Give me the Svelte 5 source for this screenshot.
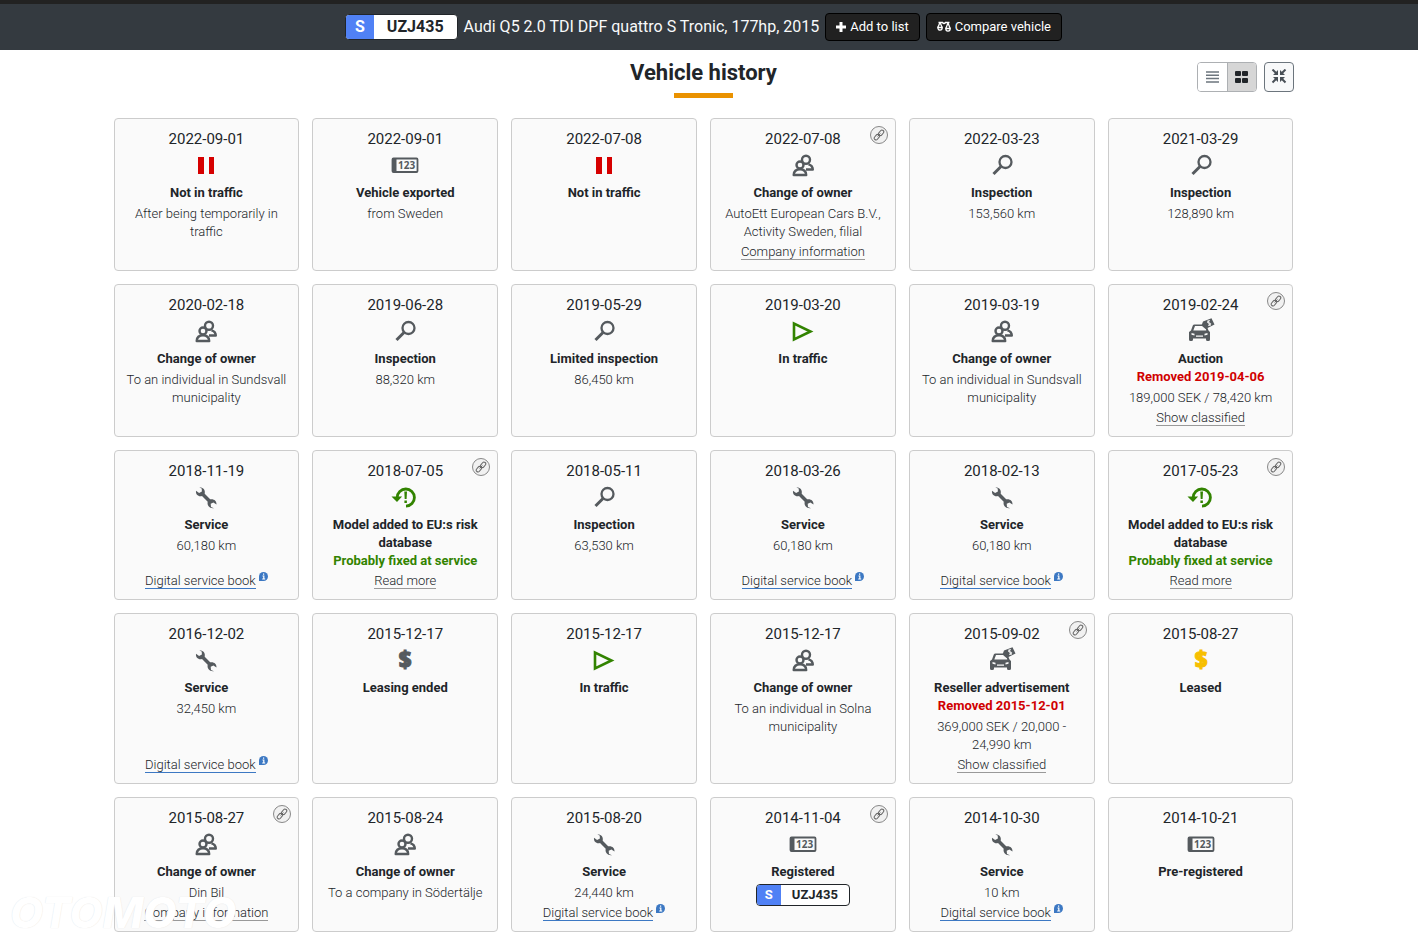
<script lang="ts">
  type IconName = 'pause' | 'plate' | 'owner' | 'search' | 'play' | 'auction' | 'wrench' | 'risk' | 'dollar' | 'leased';

  interface HistoryEvent {
    date: string;
    icon: IconName;
    title: string;
    status?: string;
    tone?: 'red' | 'green';
    text?: string;
    link?: string;
    book?: boolean;    // digital service book link with info badge
    shared?: boolean;  // chain button in the corner
    plate?: boolean;
  }

  const regNo = 'UZJ435';

  const events: HistoryEvent[] = [
    { date: '2022-09-01', icon: 'pause', title: 'Not in traffic', text: 'After being temporarily in traffic' },
    { date: '2022-09-01', icon: 'plate', title: 'Vehicle exported', text: 'from Sweden' },
    { date: '2022-07-08', icon: 'pause', title: 'Not in traffic' },
    { date: '2022-07-08', icon: 'owner', title: 'Change of owner', text: 'AutoEtt European Cars B.V., Activity Sweden, filial', link: 'Company information', shared: true },
    { date: '2022-03-23', icon: 'search', title: 'Inspection', text: '153,560 km' },
    { date: '2021-03-29', icon: 'search', title: 'Inspection', text: '128,890 km' },

    { date: '2020-02-18', icon: 'owner', title: 'Change of owner', text: 'To an individual in Sundsvall municipality' },
    { date: '2019-06-28', icon: 'search', title: 'Inspection', text: '88,320 km' },
    { date: '2019-05-29', icon: 'search', title: 'Limited inspection', text: '86,450 km' },
    { date: '2019-03-20', icon: 'play', title: 'In traffic' },
    { date: '2019-03-19', icon: 'owner', title: 'Change of owner', text: 'To an individual in Sundsvall municipality' },
    { date: '2019-02-24', icon: 'auction', title: 'Auction', status: 'Removed 2019-04-06', tone: 'red', text: '189,000 SEK / 78,420 km', link: 'Show classified', shared: true },

    { date: '2018-11-19', icon: 'wrench', title: 'Service', text: '60,180 km', book: true },
    { date: '2018-07-05', icon: 'risk', title: 'Model added to EU:s risk database', status: 'Probably fixed at service', tone: 'green', link: 'Read more', shared: true },
    { date: '2018-05-11', icon: 'search', title: 'Inspection', text: '63,530 km' },
    { date: '2018-03-26', icon: 'wrench', title: 'Service', text: '60,180 km', book: true },
    { date: '2018-02-13', icon: 'wrench', title: 'Service', text: '60,180 km', book: true },
    { date: '2017-05-23', icon: 'risk', title: 'Model added to EU:s risk database', status: 'Probably fixed at service', tone: 'green', link: 'Read more', shared: true },

    { date: '2016-12-02', icon: 'wrench', title: 'Service', text: '32,450 km', book: true },
    { date: '2015-12-17', icon: 'dollar', title: 'Leasing ended' },
    { date: '2015-12-17', icon: 'play', title: 'In traffic' },
    { date: '2015-12-17', icon: 'owner', title: 'Change of owner', text: 'To an individual in Solna municipality' },
    { date: '2015-09-02', icon: 'auction', title: 'Reseller advertisement', status: 'Removed 2015-12-01', tone: 'red', text: '369,000 SEK / 20,000 - 24,990 km', link: 'Show classified', shared: true },
    { date: '2015-08-27', icon: 'leased', title: 'Leased' },

    { date: '2015-08-27', icon: 'owner', title: 'Change of owner', text: 'Din Bil', link: 'Company information', shared: true },
    { date: '2015-08-24', icon: 'owner', title: 'Change of owner', text: 'To a company in Södertälje' },
    { date: '2015-08-20', icon: 'wrench', title: 'Service', text: '24,440 km', book: true },
    { date: '2014-11-04', icon: 'plate', title: 'Registered', plate: true, shared: true },
    { date: '2014-10-30', icon: 'wrench', title: 'Service', text: '10 km', book: true },
    { date: '2014-10-21', icon: 'plate', title: 'Pre-registered' },
  ];

  let view = $state<'list' | 'grid'>('grid');
</script>

{#snippet plate(small: boolean)}
  <span class="plate" class:plate-small={small}>
    <span class="plate-country">S</span>
    <span class="plate-number">{regNo}</span>
  </span>
{/snippet}

{#snippet icon(name: IconName)}
  <svg class="icon icon-{name}" width="28" height="28" viewBox="0 0 28 28" aria-hidden="true">
    {#if name === 'pause'}
      <path fill="currentColor" d="M6 6h6v17H6zM17 6h5v17h-5z" />
    {:else if name === 'plate'}
      <rect x="1.500" y="7.500" width="25" height="13.500" rx="1" fill="none" stroke="currentColor" stroke-width="1.800" />
      <path fill="currentColor" d="M1 7h4.500v14H1z" />
      <text x="15.700" y="18" text-anchor="middle" font-family="Open Sans" font-size="10" font-weight="700" fill="currentColor">123</text>
    {:else if name === 'owner'}
      <g fill="none" stroke="currentColor" stroke-width="2.400" stroke-linejoin="round">
        <circle cx="17" cy="8.800" r="4" />
        <path d="M19.500 13.300c2.800.8 4.300 2.400 4.300 5.200H17" />
        <circle cx="11" cy="14" r="3.500" fill="#fafafa" />
        <path d="M4.700 24c.2-3.500 2.300-5.700 6.300-5.700s6 2.200 6.200 5.700z" fill="#fafafa" />
      </g>
    {:else if name === 'search'}
      <circle cx="17.500" cy="11" r="6" fill="none" stroke="currentColor" stroke-width="2.300" />
      <path d="m13 15.500-7.500 7.500" stroke="currentColor" stroke-width="3" />
    {:else if name === 'play'}
      <path d="M5 6.500v16l16.500-8z" fill="none" stroke="currentColor" stroke-width="2.600" />
    {:else if name === 'auction'}
      <path fill="currentColor" fill-rule="evenodd" d="M2 15l2-1.500 1.800-5Q6.200 7.500 7.500 7.500h8l.5 1.500H8L6.300 13.500h13L18.500 11h2l1 2.500L23 15v7.500q0 1.500-1.500 1.500h-1Q19 24 19 22.500v-1H6v1Q6 24 4.500 24h-1Q2 24 2 22.500zM4.500 16v1.800l3 .7v-1.700zM20.500 16v1.800l-3 .7v-1.700zM9 18.500v1.300h7v-1.300z" />
      <path fill="currentColor" d="M14.500 8.500 16 4.500l8.500-3.300 3 6.300-9 4.500z" />
      <path d="M23 3.800c-1.500-.4-3 .7-2.400 1.800.5 1 2.600-.2 3.100 1 .4 1-1.400 2.200-2.700 1.500M20.900 3.500l2.400 5.500" fill="none" stroke="#fafafa" stroke-width="1" />
    {:else if name === 'wrench'}
      <path fill="currentColor" d="M7.300 4.500C11.500 4.300 13.500 7 12.700 10.700l5.500 5.600c3.700-.7 6.600 1.600 6.300 5.200l-3.100-2-2.700 1.200.3 3.200 3 1.300c-4.300.6-7.200-2.500-6.300-6.400L10 13.100c-3.700.9-6.500-1.600-6-5.300l3.100 2.200 2.800-1.400-.2-3z" />
    {:else if name === 'risk'}
      <path d="M6.200 14.500a8.600 8.600 0 1 1 8.800 8.700" fill="none" stroke="currentColor" stroke-width="2.800" />
      <path fill="currentColor" d="M.5 13.500h10.600L6 19zM13.300 8.500h2.700l-.4 7.500h-1.900zM13.400 17.500h2.500V20h-2.500z" />
    {:else}
      <text x="14" y="22" text-anchor="middle" font-family="Open Sans" font-size="22" font-weight="800" stroke="currentColor" stroke-width="1" fill="currentColor">$</text>
    {/if}
  </svg>
{/snippet}

<div class="page">
  <header class="topbar">
    {@render plate(false)}
    <span class="vehicle">Audi Q5 2.0 TDI DPF quattro S Tronic, 177hp, 2015</span>
    <button type="button" class="dark-btn">
      <svg width="10" height="10" viewBox="0 0 10 10" aria-hidden="true"><path d="M5 0v10M0 5h10" stroke="currentColor" stroke-width="3" /></svg>
      Add to list
    </button>
    <button type="button" class="dark-btn">
      <svg width="14" height="12" viewBox="0 0 14 12" fill="none" stroke="currentColor" stroke-width="1.300" aria-hidden="true">
        <path d="M1.500 1.500h4q1.500 2 3 0h4M3 1.500.8 6.500M3 1.500l2.200 5M11 2 8.800 7.500M11 2l2.200 5.500" />
        <path d="M.8 6.500h4.400c0 3.500-4.400 3.500-4.400 0zM8.800 7.500h4.400c0 3.500-4.400 3.500-4.400 0z" />
      </svg>
      Compare vehicle
    </button>
  </header>

  <main>
    <div class="heading">
      <h1>Vehicle history</h1>
      <div class="tools">
        <div class="switch">
          <button type="button" aria-label="List view" aria-pressed={view === 'list'} onclick={() => (view = 'list')}>
            <svg width="14" height="14" viewBox="0 0 14 14" aria-hidden="true"><path d="M1 2h13M1 5.300h13M1 8.600h13M1 12h13" stroke="currentColor" stroke-width="1.500" /></svg>
          </button>
          <button type="button" aria-label="Grid view" aria-pressed={view === 'grid'} onclick={() => (view = 'grid')}>
            <svg width="14" height="14" viewBox="0 0 14 14" fill="currentColor" aria-hidden="true">
              <rect x="0" y="1" width="6" height="5" rx="1" /><rect x="7" y="1" width="6" height="5" rx="1" />
              <rect x="0" y="8" width="6" height="5" rx="1" /><rect x="7" y="8" width="6" height="5" rx="1" />
            </svg>
          </button>
        </div>
        <button type="button" class="collapse" aria-label="Collapse">
          <svg width="16" height="16" viewBox="0 0 16 16" aria-hidden="true">
            <path d="m1.500.5 4 4M14.500.5l-4 4M1.500 13.500l4-4M14.500 13.500l-4-4" stroke="currentColor" stroke-width="2" />
            <path fill="currentColor" d="M7 1v5H2zM9 1v5h5zM7 13V8H2zM9 13V8h5z" />
          </svg>
        </button>
      </div>
    </div>

    <div class="events" class:events-list={view === 'list'}>
      {#each events as event}
        <article class="card">
          <time datetime={event.date}>{event.date}</time>
          {@render icon(event.icon)}
          <h2>{event.title}</h2>
          {#if event.status}<strong class="status {event.tone}">{event.status}</strong>{/if}
          {#if event.text}<p>{event.text}</p>{/if}
          {#if event.plate}{@render plate(true)}{/if}
          {#if event.link}
            <div class="more"><a href="#more">{event.link}</a></div>
          {/if}
          {#if event.book}
            <div class="more">
              <a class="book" href="#book">Digital service book</a>
              <svg class="info" width="9" height="9" viewBox="0 0 9 9" aria-hidden="true">
                <path fill="#3c78c3" d="M0 9V4.500a4.500 4.500 0 1 1 4.500 4.500z" />
                <path d="M3.500 4h1.300v3M3.200 7h3M4 2.200h1.200" fill="none" stroke="#fff" stroke-width="1.200" />
              </svg>
            </div>
          {/if}
          {#if event.shared}
            <button type="button" class="chain" aria-label="Copy link">
              <svg width="12" height="12" viewBox="0 0 12 12" fill="none" stroke="currentColor" stroke-width="1" aria-hidden="true">
                <rect x="5.200" y="2" width="6" height="3.600" rx="1.800" transform="rotate(-50 8.200 3.800)" />
                <rect x=".8" y="6.400" width="6" height="3.600" rx="1.800" transform="rotate(-50 3.800 8.200)" />
                <path d="m4.600 7.400 2.800-2.800" />
              </svg>
            </button>
          {/if}
        </article>
      {/each}
    </div>
  </main>

  <span class="watermark">OTOMOTO</span>
</div>

<style>
  :global(body) {
    background: #fff;
  }

  .page {
    position: relative;
    font-family: Roboto, 'Liberation Sans', sans-serif;
    font-size: 13px;
    line-height: 18px;
    color: #212529;
  }

  button {
    display: inline-flex;
    align-items: center;
    justify-content: center;
    box-sizing: border-box;
    padding: 0;
    font: inherit;
    cursor: pointer;
  }

  .topbar {
    display: flex;
    align-items: center;
    justify-content: center;
    gap: 6px;
    box-sizing: border-box;
    height: 50px;
    padding-right: 11px;
    border-top: 4px solid #222;
    background: #343a40;
  }

  .vehicle {
    font-size: 16px;
    color: #f8f9fa;
    white-space: nowrap;
  }

  .plate {
    display: inline-flex;
    box-sizing: border-box;
    height: 26px;
    overflow: hidden;
    border: 1px solid #212529;
    border-radius: 4px;
    background: #fff;
    font-size: 16px;
    line-height: 24px;
    font-weight: 700;
  }

  .plate-country {
    padding: 0 9px;
    background: #5081f5;
    color: #fff;
  }

  .plate-number {
    padding: 0 13px;
    color: #212529;
  }

  .plate-small {
    height: 22px;
    margin-top: 3px;
    font-size: 13px;
    line-height: 20px;
  }

  .plate-small .plate-country {
    padding: 0 8px;
  }

  .plate-small .plate-number {
    padding: 0 11px;
  }

  .dark-btn {
    gap: 4px;
    height: 28px;
    padding: 0 10px;
    border: 1px solid #000;
    border-radius: 4px;
    background: #212121;
    color: #fff;
    white-space: nowrap;
  }

  main {
    max-width: 1180px;
    margin: 0 auto;
    padding: 0 11px 0 0;
  }

  .heading {
    display: grid;
    grid-template-columns: 1fr auto 1fr;
    align-items: start;
    padding: 10px 0 20px;
  }

  h1 {
    grid-column: 2;
    display: flex;
    flex-direction: column;
    align-items: center;
    gap: 7px;
    margin: 0;
    font-size: 22px;
    line-height: 26px;
    font-weight: 700;
  }

  h1::after {
    content: '';
    width: 59px;
    height: 5px;
    background: #ea9200;
  }

  .tools {
    display: flex;
    justify-content: flex-end;
    gap: 7px;
    padding-top: 2px;
  }

  .switch {
    display: flex;
    border: 1px solid #adb0b3;
    border-radius: 4px;
    overflow: hidden;
  }

  .switch button {
    width: 29px;
    height: 28px;
    border: 0;
    background: #fff;
    color: #6c757d;
  }

  .switch button + button {
    border-left: 1px solid #adb0b3;
  }

  .switch button[aria-pressed='true'] {
    background: #d6d6d6;
    color: #212529;
  }

  .collapse {
    width: 30px;
    height: 30px;
    border: 1px solid #6c757d;
    border-radius: 4px;
    background: #f8f9fa;
    color: #495057;
  }

  .events {
    display: grid;
    grid-template-columns: repeat(6, minmax(0, 1fr));
    gap: 13px;
  }

  .events-list {
    grid-template-columns: 1fr;
  }

  .card {
    position: relative;
    display: flex;
    flex-direction: column;
    align-items: center;
    padding: 9px 12px;
    border: 1px solid #ccc;
    border-radius: 4px;
    background: #fafafa;
    text-align: center;
  }

  time {
    font-size: 15px;
    line-height: 22px;
  }

  .icon {
    margin: 1px 0;
    color: #555a5e;
    flex: none;
  }

  .icon-pause {
    color: #d60000;
  }

  .icon-play,
  .icon-risk {
    color: #328300;
  }

  .icon-leased {
    color: #f7bf00;
  }

  h2 {
    margin: 4px 0 0;
    font-size: 13px;
    line-height: 18px;
    font-weight: 700;
  }

  .status {
    font-weight: 700;
  }

  .red {
    color: #d00000;
  }

  .green {
    color: #328300;
  }

  p {
    margin: 3px 0 0;
    color: #212529;
    font-weight: 300;
  }

  .more {
    margin-top: auto;
    padding-top: 2px;
    font-weight: 300;
    white-space: nowrap;
  }

  .more a {
    border-bottom: 1px solid #999;
    color: #212529;
    text-decoration: none;
  }

  .more .book {
    border-bottom-color: #3c78c3;
  }

  .info {
    vertical-align: 4px;
  }

  .chain {
    position: absolute;
    top: 7px;
    right: 7px;
    width: 18px;
    height: 18px;
    border: 1px solid #888;
    border-radius: 50%;
    background: #f1f1f1;
    color: #666;
  }

  .watermark {
    position: absolute;
    bottom: 0;
    left: 10px;
    font-family: Inter, sans-serif;
    font-size: 43px;
    line-height: 40px;
    font-style: italic;
    font-weight: 800;
    color: #fff;
    text-shadow: 0 0 1px #ddd;
    pointer-events: none;
  }
</style>
